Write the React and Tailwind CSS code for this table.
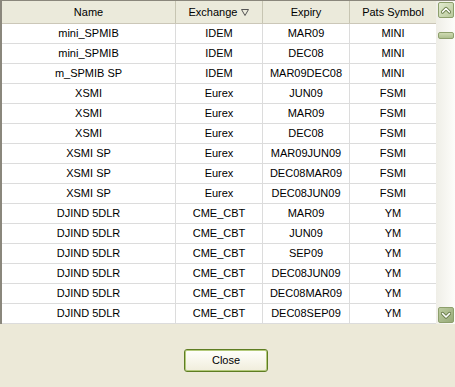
const ROWS = [
  ["mini_SPMIB", "IDEM", "MAR09", "MINI"],
  ["mini_SPMIB", "IDEM", "DEC08", "MINI"],
  ["m_SPMIB SP", "IDEM", "MAR09DEC08", "MINI"],
  ["XSMI", "Eurex", "JUN09", "FSMI"],
  ["XSMI", "Eurex", "MAR09", "FSMI"],
  ["XSMI", "Eurex", "DEC08", "FSMI"],
  ["XSMI SP", "Eurex", "MAR09JUN09", "FSMI"],
  ["XSMI SP", "Eurex", "DEC08MAR09", "FSMI"],
  ["XSMI SP", "Eurex", "DEC08JUN09", "FSMI"],
  ["DJIND 5DLR", "CME_CBT", "MAR09", "YM"],
  ["DJIND 5DLR", "CME_CBT", "JUN09", "YM"],
  ["DJIND 5DLR", "CME_CBT", "SEP09", "YM"],
  ["DJIND 5DLR", "CME_CBT", "DEC08JUN09", "YM"],
  ["DJIND 5DLR", "CME_CBT", "DEC08MAR09", "YM"],
  ["DJIND 5DLR", "CME_CBT", "DEC08SEP09", "YM"],
];

function Chevron({ up }) {
  const d = up ? "M1.5 6 L5 2.5 L8.5 6" : "M1.5 2.5 L5 6 L8.5 2.5";
  return (
    <svg width="10" height="9" viewBox="0 0 10 9">
      <path d={d} fill="none" stroke="#6a7d4a" strokeWidth="3.2" strokeLinecap="round" strokeLinejoin="round" />
      <path d={d} fill="none" stroke="#ffffff" strokeWidth="1.6" strokeLinecap="round" strokeLinejoin="round" />
    </svg>
  );
}

function ScrollButton({ up }) {
  const bg = up ? "from-[#e2ebcf] to-[#b9c99c]" : "from-[#bccba0] to-[#97aa78]";
  return (
    <div className={`w-[16px] h-[16px] mx-auto rounded-[2px] border border-[#8d9f6c] bg-gradient-to-br ${bg} flex items-center justify-center`}>
      <Chevron up={up} />
    </div>
  );
}

export default function App() {
  return (
    <div className="w-[455px] h-[387px] bg-[#ece9d8] flex flex-col font-['Liberation_Sans',Arial,sans-serif] text-[11px] text-black">
      {/* list panel */}
      <div className="h-[324px] flex border-l-2 border-t border-[#8a877c] bg-white overflow-hidden">
        <div className="w-[434px] flex flex-col">
          {/* header */}
          <div className="grid grid-cols-[174px_87px_87px_86px] h-[23px] bg-[#ebeadb] border-b border-[#cbc7b8]">
            <div className="flex items-center justify-center border-r border-[#c7c5b2]">Name</div>
            <div className="flex items-center justify-center gap-[4px] border-r border-[#c7c5b2]">
              <span>Exchange</span>
              <svg width="8" height="7" viewBox="0 0 8 7">
                <path d="M0.5 0.5 H7.5 L4 6.5 Z" fill="none" stroke="#555" strokeWidth="1" />
              </svg>
            </div>
            <div className="flex items-center justify-center border-r border-[#c7c5b2]">Expiry</div>
            <div className="flex items-center justify-center">Pats Symbol</div>
          </div>
          {/* rows */}
          {ROWS.map((r, i) => (
            <div key={i} className="grid grid-cols-[174px_87px_87px_86px] h-[20px] shrink-0 border-b border-[#dcdcdc]">
              <div className="flex items-center justify-center border-r border-[#dcdcdc]">{r[0]}</div>
              <div className="flex items-center justify-center border-r border-[#dcdcdc]">{r[1]}</div>
              <div className="flex items-center justify-center border-r border-[#dcdcdc]">{r[2]}</div>
              <div className="flex items-center justify-center">{r[3]}</div>
            </div>
          ))}
        </div>
        {/* scrollbar */}
        <div className="w-[19px] flex flex-col bg-gradient-to-r from-[#efeee7] to-[#fdfdfa] pt-[1px] pb-[1px]">
          <ScrollButton up />
          <div className="mt-[14px] mx-auto w-[16px] h-[7px] rounded-[2px] border border-[#8d9f6c] bg-gradient-to-b from-[#cfdbb2] to-[#aebf8f]" />
          <div className="mt-auto">
            <ScrollButton />
          </div>
        </div>
      </div>
      {/* footer */}
      <div className="mt-[25px] ml-[184px]">
        <button className="w-[84px] h-[23px] rounded-[3px] border border-[#5e7d22] shadow-[inset_0_0_0_1px_#b3c97a] bg-gradient-to-b from-[#fffffb] to-[#f0eddc] flex items-center justify-center text-[11px] text-black">
          Close
        </button>
      </div>
    </div>
  );
}
